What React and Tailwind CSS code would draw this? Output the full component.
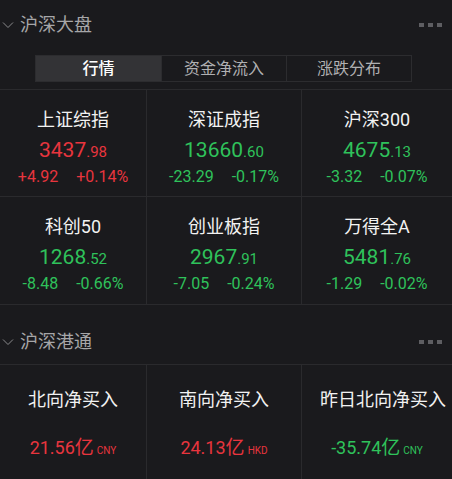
const up = 'text-[#e8353e]';
const down = 'text-[#2fc25b]';

const indices = [
  { name: '上证综指', int: '3437', dec: '98', chg: '+4.92', pct: '+0.14%', rise: true },
  { name: '深证成指', int: '13660', dec: '60', chg: '-23.29', pct: '-0.17%', rise: false },
  { name: '沪深300', int: '4675', dec: '13', chg: '-3.32', pct: '-0.07%', rise: false },
  { name: '科创50', int: '1268', dec: '52', chg: '-8.48', pct: '-0.66%', rise: false },
  { name: '创业板指', int: '2967', dec: '91', chg: '-7.05', pct: '-0.24%', rise: false },
  { name: '万得全A', int: '5481', dec: '76', chg: '-1.29', pct: '-0.02%', rise: false },
];

const flows = [
  { name: '北向净买入', value: '21.56', unit: 'CNY', rise: true },
  { name: '南向净买入', value: '24.13', unit: 'HKD', rise: true },
  { name: '昨日北向净买入', value: '-35.74', unit: 'CNY', rise: false },
];

const font = { fontFamily: 'Roboto, "Noto Sans CJK SC", sans-serif' };

const SectionHeader = ({ title, className }) => (
  <div className={`flex items-center justify-between pl-[2px] pr-[10px] ${className}`}>
    <div className="flex items-center">
      <svg width="12" height="10" viewBox="0 0 12 10" className="mr-[6px]">
        <path d="M1 2.5 L6 7.5 L11 2.5" fill="none" stroke="#8a8a8c" strokeWidth="1" />
      </svg>
      <span className="text-[18px] leading-[24px] text-[#a6a6a8]">{title}</span>
    </div>
    <div className="flex gap-[4px]">
      <span className="w-[5px] h-[4px] bg-[#5e5e62]" />
      <span className="w-[5px] h-[4px] bg-[#5e5e62]" />
      <span className="w-[5px] h-[4px] bg-[#5e5e62]" />
    </div>
  </div>
);

const Tabs = () => {
  const tabs = ['行情', '资金净流入', '涨跌分布'];
  return (
    <div className="ml-[35px] mr-[40px] mt-[5px] h-[27px] grid grid-cols-3 border border-[#2c2c2f]">
      {tabs.map((t, i) => (
        <div
          key={t}
          className={`flex items-center justify-center text-[16px] ${
            i === 0 ? 'bg-[#333336] text-white font-medium' : 'text-[#b0b0b2] border-l border-[#2c2c2f]'
          }`}
        >
          {t}
        </div>
      ))}
    </div>
  );
};

const IndexCell = ({ item, i }) => {
  const color = item.rise ? up : down;
  return (
    <div
      className={`h-[107px] flex flex-col items-center pt-[18px] ${i % 3 !== 0 ? 'border-l border-[#2a2a2d]' : ''} ${
        i < 3 ? 'border-b border-[#2a2a2d]' : ''
      }`}
    >
      <div className="text-[18px] leading-[24px] text-[#f2f2f2]">{item.name}</div>
      <div className={`mt-[4px] leading-[28px] ${color}`}>
        <span className="text-[21px]">{item.int}</span>
        <span className="text-[15px]">.{item.dec}</span>
      </div>
      <div className={`mt-[1px] leading-[20px] text-[16px] flex gap-[18px] ${color}`}>
        <span>{item.chg}</span>
        <span>{item.pct}</span>
      </div>
    </div>
  );
};

const FlowCell = ({ item, i }) => {
  const color = item.rise ? up : down;
  return (
    <div className={`h-[116px] flex flex-col items-center pt-[23px] ${i > 0 ? 'border-l border-[#2a2a2d]' : ''}`}>
      <div className={`text-[18px] leading-[24px] text-[#f2f2f2] whitespace-nowrap ${i === 2 ? 'pl-[12px]' : ''}`}>
        {item.name}
      </div>
      <div className={`mt-[24px] leading-[24px] flex items-baseline ${color}`}>
        <span className="text-[18px]">{item.value}</span>
        <span className="text-[19px]">亿</span>
        <span className="text-[10px] ml-[3px]">{item.unit}</span>
      </div>
    </div>
  );
};

export default function App() {
  return (
    <div className="w-[452px] h-[479px] overflow-hidden bg-[#1a1a1d]" style={font}>
      <SectionHeader title="沪深大盘" className="h-[50px]" />
      <Tabs />
      <div className="mt-[7px] grid grid-cols-[146px_155px_1fr] border-t border-b border-[#2a2a2d]">
        {indices.map((item, i) => (
          <IndexCell key={item.name} item={item} i={i} />
        ))}
      </div>
      <SectionHeader title="沪深港通" className="h-[59px] pt-[14px]" />
      <div className="grid grid-cols-[146px_155px_1fr] border-t border-[#2a2a2d]">
        {flows.map((item, i) => (
          <FlowCell key={item.name} item={item} i={i} />
        ))}
      </div>
    </div>
  );
}
